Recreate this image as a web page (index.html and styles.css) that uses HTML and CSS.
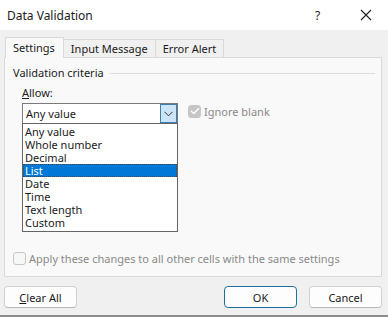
FILE: index.html
```html
<!DOCTYPE html>
<html lang="en">
<head>
    <meta charset="UTF-8">
    <title>Data Validation</title>
    <link rel="stylesheet" href="styles.css">
</head>
<body>
    <div class="dialog">
        <div class="titlebar">
            <span class="title">Data Validation</span>
            <span class="help">?</span>
            <span class="close">
                <svg width="12" height="12" viewBox="0 0 12 12"><path d="M1 1L11 11M11 1L1 11" stroke="#222" stroke-width="1.1" fill="none"/></svg>
            </span>
        </div>

        <div class="body">
            <div class="tabs">
                <div class="tab active">Settings</div>
                <div class="tab">Input Message</div>
                <div class="tab">Error Alert</div>
            </div>

            <div class="panel">
                <div class="group-title">
                    <span>Validation criteria</span>
                    <div class="rule"></div>
                </div>

                <div class="allow-label"><u>A</u>llow:</div>

                <div class="allow-row">
                    <div class="combo">
                        <div class="combo-box">
                            <span class="combo-text">Any value</span>
                            <span class="combo-btn">
                                <svg width="9" height="6" viewBox="0 0 9 6"><path d="M0.5 0.8L4.5 4.8L8.5 0.8" stroke="#333" stroke-width="1" fill="none"/></svg>
                            </span>
                        </div>
                        <ul class="options">
                            <li>Any value</li>
                            <li>Whole number</li>
                            <li>Decimal</li>
                            <li class="selected">List</li>
                            <li>Date</li>
                            <li>Time</li>
                            <li>Text length</li>
                            <li>Custom</li>
                        </ul>
                    </div>
                    <label class="check disabled">
                        <span class="box checked">
                            <svg width="10" height="8" viewBox="0 0 10 8"><path d="M1 4L3.8 6.6L9 1.2" stroke="#fff" stroke-width="1.4" fill="none"/></svg>
                        </span>
                        Ignore blank
                    </label>
                </div>

                <label class="check disabled apply">
                    <span class="box"></span>
                    Apply these changes to all other cells with the same settings
                </label>
            </div>

            <div class="footer">
                <button class="btn"><u>C</u>lear All</button>
                <div class="spacer"></div>
                <button class="btn primary">OK</button>
                <button class="btn">Cancel</button>
            </div>
        </div>
    </div>
</body>
</html>
```

FILE: styles.css
```css
* {
    box-sizing: border-box;
}
body {
    margin: 0;
    font-family: "Noto Sans", "Open Sans", sans-serif;
    color: #1a1a1a;
    background-color: #f0f0f0;
}
.dialog {
    width: 388px;
    height: 317px;
    background-color: #f0f0f0;
    border-bottom: 2px solid #8c8c8c;
    overflow: hidden;
}
.titlebar {
    height: 30px;
    background-color: #fff;
    display: flex;
    align-items: center;
    padding-left: 7px;
}
.title {
    font-size: 12px;
    flex: 1;
}
.help {
    font-size: 12px;
    width: 12px;
    margin-right: 33px;
}
.close {
    width: 12px;
    height: 12px;
    margin-right: 16px;
    display: flex;
}
.body {
    padding: 6px 6px 0 4px;
}
.tabs {
    display: flex;
    align-items: flex-end;
    height: 21px;
    padding-left: 1px;
}
.tab {
    font-size: 11px;
    height: 18px;
    line-height: 17px;
    padding: 0 7px;
    border: 1px solid #d9d9d9;
    border-bottom: none;
    border-left: none;
    background-color: #f0f0f0;
}
.tab.active {
    height: 21px;
    line-height: 20px;
    background-color: #f9f9f9;
    border-left: 1px solid #d9d9d9;
    padding: 0 8px 0 7px;
    position: relative;
    top: 1px;
    z-index: 1;
}
.panel {
    position: relative;
    height: 220px;
    background-color: #f9f9f9;
    border: 1px solid #d9d9d9;
    padding: 7px 0 0 8px;
}
.group-title {
    display: flex;
    align-items: center;
    font-size: 11px;
    color: #222;
}
.rule {
    flex: 1;
    height: 1px;
    background-color: #dcdcdc;
    margin: 1px 6px 0 6px;
}
.allow-label {
    font-size: 11px;
    margin: 5px 0 0 9px;
    color: #222;
}
.allow-row {
    display: flex;
    margin: 3px 0 0 9px;
}
.combo {
    position: relative;
    width: 156px;
}
.combo-box {
    height: 21px;
    border: 1px solid #7a7a7a;
    background-color: #fff;
    display: flex;
    align-items: center;
}
.combo-text {
    flex: 1;
    font-size: 11px;
    padding-left: 3px;
}
.combo-btn {
    width: 17px;
    height: 19px;
    background-color: #cce4f7;
    border: 1px solid #3c7fb1;
    display: flex;
    align-items: center;
    justify-content: center;
}
.options {
    position: absolute;
    top: 20px;
    left: 0;
    width: 156px;
    margin: 0;
    padding: 1px 0 2px 0;
    list-style: none;
    background-color: #fff;
    border: 1px solid #646464;
    z-index: 2;
}
.options li {
    font-size: 11px;
    height: 13px;
    line-height: 13px;
    padding-left: 2px;
}
.options li.selected {
    background-color: #0078d7;
    color: #fff;
    outline: 1px dotted #444;
    outline-offset: -1px;
}
.check {
    display: flex;
    align-items: center;
    font-size: 11px;
    gap: 3px;
}
.check.disabled {
    color: #8a8a8a;
}
.allow-row .check {
    margin-left: 10px;
    height: 14px;
    margin-top: 1px;
}
.box {
    width: 13px;
    height: 13px;
    border: 1px solid #c6c6c6;
    border-radius: 3px;
    background-color: #f7f7f7;
    display: flex;
    align-items: center;
    justify-content: center;
}
.box.checked {
    background-color: #c6c6c6;
}
.apply {
    position: absolute;
    left: 8px;
    top: 193px;
}
.footer {
    display: flex;
    margin-top: 9px;
    gap: 12px;
}
.spacer {
    flex: 1;
}
.btn {
    font-family: "Noto Sans", "Open Sans", sans-serif;
    font-size: 11px;
    color: #1a1a1a;
    width: 73px;
    height: 22px;
    background-color: #fdfdfd;
    border: 1px solid #d0d0d0;
    border-bottom-color: #b8b8b8;
    border-radius: 4px;
    padding: 0;
}
.btn.primary {
    border-color: #1f6f9f;
}
```
